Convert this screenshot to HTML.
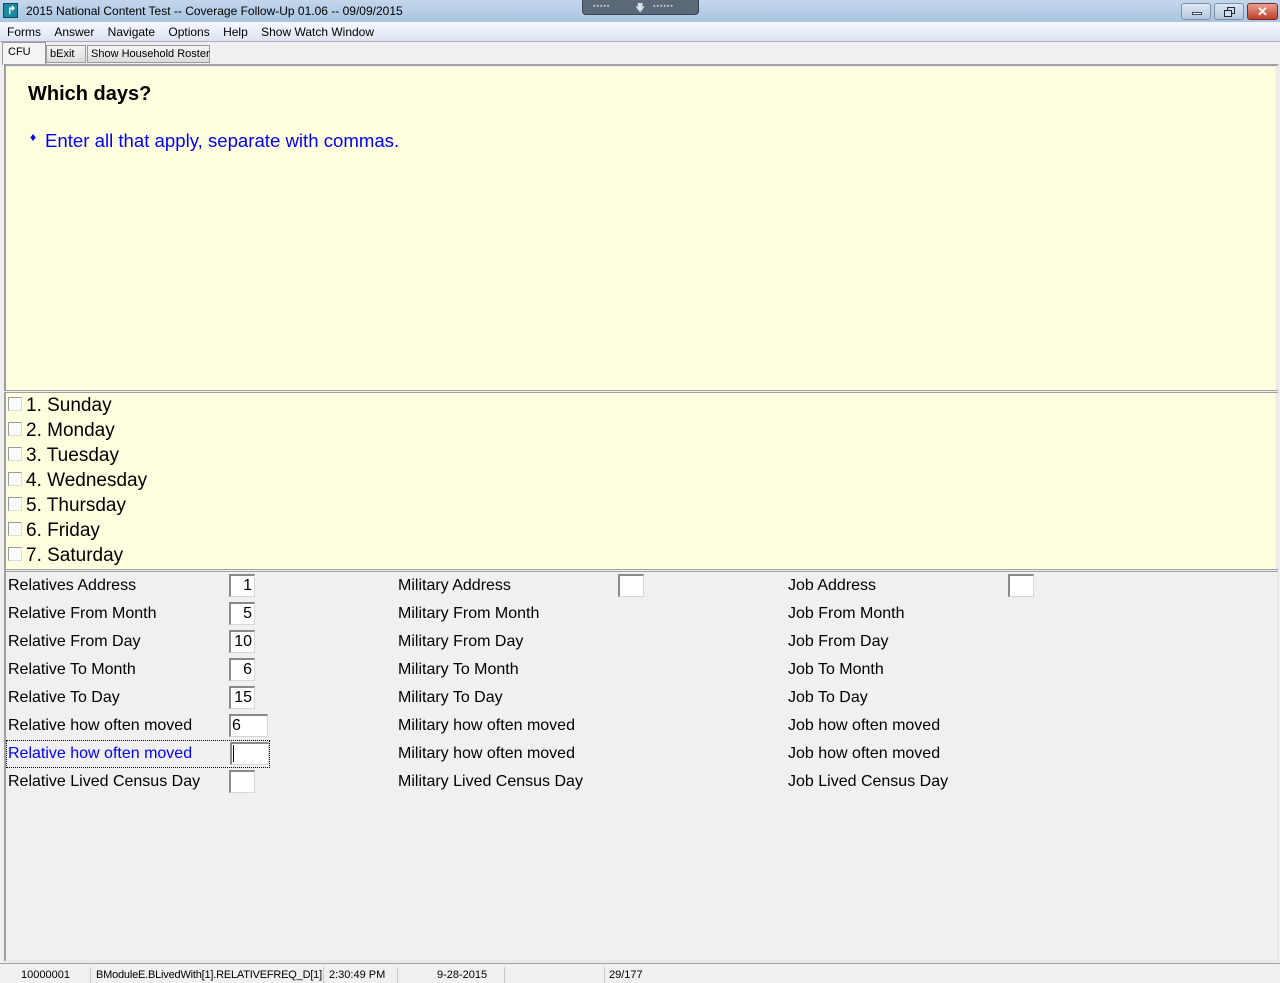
<!DOCTYPE html>
<html><head><style>
*{margin:0;padding:0;box-sizing:border-box}
body{width:1280px;height:983px;position:relative;overflow:hidden;background:#f0f0f0;font-family:"Liberation Sans",Arial,sans-serif}
.a{position:absolute}
.t{font-family:"Liberation Sans",sans-serif;font-size:12px;color:#000;white-space:nowrap}
.l{position:absolute;font-size:16px;color:#000;white-space:nowrap}
.b{position:absolute;height:23px;background:#fff;border:1px solid #d8d8d8;border-top:2px solid #8a8a8a;border-left:2px solid #8a8a8a;font-size:16px;text-align:right;padding-right:2px;line-height:19px}
.cb{position:absolute;left:8px;width:14px;height:14px;background:#fafafa;border:1px solid #9a9a9a;border-right-color:#ddd;border-bottom-color:#ddd}
.d{position:absolute;left:26px;font-size:19px;color:#000}
.wb{position:absolute;top:3px;height:17px;border:1px solid #7f8fa5;border-radius:3px;background:linear-gradient(#dce7f3,#b3c8df)}
</style></head><body>
<div class="a" style="left:0;top:0;width:1280px;height:22px;background:linear-gradient(#c3d7ec,#aac4e0)"></div>
<div class="a" style="left:3px;top:3px;width:15px;height:15px;background:#1a8aa0;border:1px solid #0a4a60"><span style="position:absolute;left:3px;top:0;color:#fff;font-size:11px;font-weight:bold">↱</span></div>
<div class="a t" style="left:26px;top:4px;">2015 National Content Test -- Coverage Follow-Up 01.06 -- 09/09/2015</div>
<div class="a" style="left:582px;top:0;width:117px;height:15px;background:#5a6878;border-radius:0 0 4px 4px;border:1px solid #3a4654;border-top:none"></div>
<div class="a" style="left:593px;top:3px;color:#c8d0da;font-size:7px;letter-spacing:1px">▪▪▪▪▪</div>
<div class="a" style="left:635px;top:1px;color:#d8e0ea;font-size:10px">🡇</div>
<div class="a" style="left:653px;top:3px;color:#c8d0da;font-size:7px;letter-spacing:1px">▪▪▪▪▪▪</div>
<div class="wb" style="left:1181px;width:30px"><div class="a" style="left:10px;top:8px;width:10px;height:3px;background:#fff;border:1px solid #445"></div></div>
<div class="wb" style="left:1214px;width:30px"><div class="a" style="left:12px;top:3px;width:8px;height:7px;border:1px solid #223"></div><div class="a" style="left:9px;top:6px;width:8px;height:7px;border:1px solid #223;background:#d0dcea"></div></div>
<div class="wb" style="left:1247px;width:31px;background:linear-gradient(#e8a090,#c0402a);border-color:#7a2a20;color:#fff;font-weight:bold;font-size:13px;text-align:center;line-height:15px">✕</div>
<div class="a" style="left:0;top:22px;width:1280px;height:19px;background:linear-gradient(#f6f8fc,#dde4f2)"></div>
<div class="a t" style="left:7px;top:25px;">Forms&nbsp;&nbsp;&nbsp;&nbsp;Answer&nbsp;&nbsp;&nbsp;&nbsp;Navigate&nbsp;&nbsp;&nbsp;&nbsp;Options&nbsp;&nbsp;&nbsp;&nbsp;Help&nbsp;&nbsp;&nbsp;&nbsp;Show Watch Window</div>
<div class="a" style="left:0;top:41px;width:1280px;height:1px;background:#aab"></div>
<div class="a" style="left:2px;top:42px;width:44px;height:23px;background:#f4f4f4;border:1px solid #999;border-bottom:none"></div>
<div class="a t" style="left:8px;top:46px;font-size:11px">CFU</div>
<div class="a" style="left:46px;top:45px;width:40px;height:18px;background:linear-gradient(#f4f4f4,#dcdcdc);border:1px solid #999"></div>
<div class="a t" style="left:50px;top:48px;font-size:11px">bExit</div>
<div class="a" style="left:87px;top:45px;width:123px;height:18px;background:linear-gradient(#f4f4f4,#dcdcdc);border:1px solid #999"></div>
<div class="a t" style="left:91px;top:48px;font-size:11px">Show Household Roster</div>
<div class="a" style="left:4px;top:64px;width:1275px;height:898px;border:2px solid #a0a0a0;border-right-color:#e8e8e8;border-bottom-color:#e8e8e8"></div>
<div class="a" style="left:6px;top:67px;width:1269px;height:323px;background:#ffffe0"></div>
<div class="a" style="left:28px;top:83px;font-size:20px;font-weight:bold">Which days?</div>
<div class="a" style="left:30px;top:130px;font-size:12px;color:#00f">♦</div>
<div class="a" style="left:45px;top:130px;font-size:18.6px;color:#00f">Enter all that apply, separate with commas.</div>
<div class="a" style="left:4px;top:390px;width:1274px;height:3px;border-top:1px solid #a0a0a0;border-bottom:1px solid #a0a0a0;background:#f0f0f0"></div>
<div class="a" style="left:6px;top:393px;width:1269px;height:176px;background:#ffffe0"></div>
<div class="cb" style="top:397px"></div><div class="d" style="top:395px">1. Sunday</div>
<div class="cb" style="top:422px"></div><div class="d" style="top:420px">2. Monday</div>
<div class="cb" style="top:447px"></div><div class="d" style="top:445px">3. Tuesday</div>
<div class="cb" style="top:472px"></div><div class="d" style="top:470px">4. Wednesday</div>
<div class="cb" style="top:497px"></div><div class="d" style="top:495px">5. Thursday</div>
<div class="cb" style="top:522px"></div><div class="d" style="top:520px">6. Friday</div>
<div class="cb" style="top:547px"></div><div class="d" style="top:545px">7. Saturday</div>
<div class="a" style="left:4px;top:569px;width:1274px;height:3px;border-top:1px solid #a0a0a0;border-bottom:1px solid #a0a0a0"></div>

<div class="l" style="left:8px;top:577px">Relatives Address</div><div class="b" style="left:229px;top:574px;width:26px">1</div>
<div class="l" style="left:8px;top:605px">Relative From Month</div><div class="b" style="left:229px;top:602px;width:26px">5</div>
<div class="l" style="left:8px;top:633px">Relative From Day</div><div class="b" style="left:229px;top:630px;width:26px">10</div>
<div class="l" style="left:8px;top:661px">Relative To Month</div><div class="b" style="left:229px;top:658px;width:26px">6</div>
<div class="l" style="left:8px;top:689px">Relative To Day</div><div class="b" style="left:229px;top:686px;width:26px">15</div>
<div class="l" style="left:8px;top:717px">Relative how often moved</div><div class="b" style="left:229px;top:714px;width:39px;text-align:left;padding-left:1px">6</div>
<div class="a" style="left:6px;top:740px;width:264px;height:28px;border:1px dotted #000"></div>
<div class="l" style="left:8px;top:745px;color:#00f">Relative how often moved</div><div class="b" style="left:230px;top:742px;width:39px"></div>
<div class="a" style="left:233px;top:745px;width:1px;height:17px;background:#000"></div>
<div class="l" style="left:8px;top:773px">Relative Lived Census Day</div><div class="b" style="left:229px;top:770px;width:26px"></div>

<div class="l" style="left:398px;top:577px">Military Address</div><div class="b" style="left:618px;top:574px;width:26px"></div>
<div class="l" style="left:398px;top:605px">Military From Month</div>
<div class="l" style="left:398px;top:633px">Military From Day</div>
<div class="l" style="left:398px;top:661px">Military To Month</div>
<div class="l" style="left:398px;top:689px">Military To Day</div>
<div class="l" style="left:398px;top:717px">Military how often moved</div>
<div class="l" style="left:398px;top:745px">Military how often moved</div>
<div class="l" style="left:398px;top:773px">Military Lived Census Day</div>

<div class="l" style="left:788px;top:577px">Job Address</div><div class="b" style="left:1008px;top:574px;width:26px"></div>
<div class="l" style="left:788px;top:605px">Job From Month</div>
<div class="l" style="left:788px;top:633px">Job From Day</div>
<div class="l" style="left:788px;top:661px">Job To Month</div>
<div class="l" style="left:788px;top:689px">Job To Day</div>
<div class="l" style="left:788px;top:717px">Job how often moved</div>
<div class="l" style="left:788px;top:745px">Job how often moved</div>
<div class="l" style="left:788px;top:773px">Job Lived Census Day</div>

<div class="a" style="left:0;top:963px;width:1280px;height:1px;background:#a0a0a0"></div>
<div class="a" style="left:0;top:966px;width:1280px;height:17px;background:#f0f0f0"></div>
<div class="a t" style="left:21px;top:969px;font-size:11px">10000001</div>
<div class="a" style="left:90px;top:967px;width:1px;height:16px;background:#c8c8c8"></div>
<div class="a t" style="left:96px;top:969px;font-size:11px;letter-spacing:-0.2px">BModuleE.BLivedWith[1].RELATIVEFREQ_D[1]</div>
<div class="a" style="left:323px;top:967px;width:1px;height:16px;background:#c8c8c8"></div>
<div class="a t" style="left:329px;top:969px;font-size:11px">2:30:49 PM</div>
<div class="a" style="left:397px;top:967px;width:1px;height:16px;background:#c8c8c8"></div>
<div class="a t" style="left:437px;top:969px;font-size:11px">9-28-2015</div>
<div class="a" style="left:504px;top:967px;width:1px;height:16px;background:#c8c8c8"></div>
<div class="a" style="left:604px;top:967px;width:1px;height:16px;background:#c8c8c8"></div>
<div class="a t" style="left:609px;top:969px;font-size:11px">29/177</div>
</body></html>
